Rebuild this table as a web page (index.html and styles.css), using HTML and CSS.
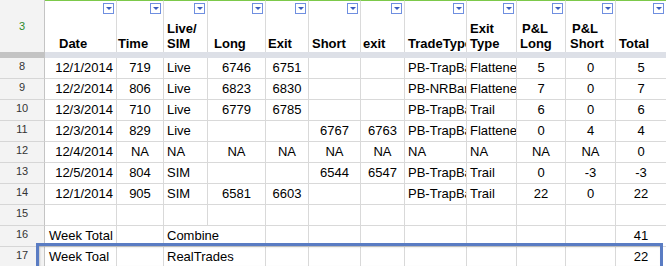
FILE: index.html
```html
<!DOCTYPE html>
<html>
<head>
<meta charset="utf-8">
<link rel="stylesheet" href="styles.css">
</head>
<body>
<div class="sheet">
  <div class="row head">
    <div class="rh rh-head">3</div>
    <div class="hc"><span class="filter"></span><div class="ht p14">Date</div></div>
    <div class="hc"><span class="filter"></span><div class="ht p1">Time</div></div>
    <div class="hc"><span class="filter"></span><div class="ht">Live/<br>SIM</div></div>
    <div class="hc"><span class="filter"></span><div class="ht p6">Long</div></div>
    <div class="hc"><span class="filter"></span><div class="ht p2">Exit</div></div>
    <div class="hc"><span class="filter"></span><div class="ht">Short</div></div>
    <div class="hc"><span class="filter"></span><div class="ht p2">exit</div></div>
    <div class="hc"><span class="filter"></span><div class="ht">TradeType</div></div>
    <div class="hc"><span class="filter"></span><div class="ht">Exit<br>Type</div></div>
    <div class="hc"><span class="filter"></span><div class="ht"><span class="in2">P&amp;L</span><br>Long</div></div>
    <div class="hc"><span class="filter"></span><div class="ht p4"><span class="in2">P&amp;L</span><br>Short</div></div>
    <div class="hc"><span class="filter"></span><div class="ht">Total</div></div>
  </div>
  <div class="freeze"><div class="fz-rh"></div><div class="fz-data"></div></div>

  <div class="row">
    <div class="rh">8</div>
    <div class="c r">12/1/2014</div><div class="c m">719</div><div class="c">Live</div>
    <div class="c m">6746</div><div class="c m">6751</div><div class="c m"></div><div class="c m"></div>
    <div class="c">PB-TrapBar</div><div class="c">Flattened</div>
    <div class="c m">5</div><div class="c m">0</div><div class="c m">5</div>
  </div>
  <div class="row">
    <div class="rh">9</div>
    <div class="c r">12/2/2014</div><div class="c m">806</div><div class="c">Live</div>
    <div class="c m">6823</div><div class="c m">6830</div><div class="c m"></div><div class="c m"></div>
    <div class="c">PB-NRBar</div><div class="c">Flattened</div>
    <div class="c m">7</div><div class="c m">0</div><div class="c m">7</div>
  </div>
  <div class="row">
    <div class="rh">10</div>
    <div class="c r">12/3/2014</div><div class="c m">710</div><div class="c">Live</div>
    <div class="c m">6779</div><div class="c m">6785</div><div class="c m"></div><div class="c m"></div>
    <div class="c">PB-TrapBar</div><div class="c">Trail</div>
    <div class="c m">6</div><div class="c m">0</div><div class="c m">6</div>
  </div>
  <div class="row">
    <div class="rh">11</div>
    <div class="c r">12/3/2014</div><div class="c m">829</div><div class="c">Live</div>
    <div class="c m"></div><div class="c m"></div><div class="c m">6767</div><div class="c m">6763</div>
    <div class="c">PB-TrapBar</div><div class="c">Flattened</div>
    <div class="c m">0</div><div class="c m">4</div><div class="c m">4</div>
  </div>
  <div class="row">
    <div class="rh">12</div>
    <div class="c r">12/4/2014</div><div class="c m">NA</div><div class="c">NA</div>
    <div class="c m">NA</div><div class="c m">NA</div><div class="c m">NA</div><div class="c m">NA</div>
    <div class="c">NA</div><div class="c">NA</div>
    <div class="c m">NA</div><div class="c m">NA</div><div class="c m">0</div>
  </div>
  <div class="row">
    <div class="rh">13</div>
    <div class="c r">12/5/2014</div><div class="c m">804</div><div class="c">SIM</div>
    <div class="c m"></div><div class="c m"></div><div class="c m">6544</div><div class="c m">6547</div>
    <div class="c">PB-TrapBar</div><div class="c">Trail</div>
    <div class="c m">0</div><div class="c m">-3</div><div class="c m">-3</div>
  </div>
  <div class="row">
    <div class="rh">14</div>
    <div class="c r">12/1/2014</div><div class="c m">905</div><div class="c">SIM</div>
    <div class="c m">6581</div><div class="c m">6603</div><div class="c m"></div><div class="c m"></div>
    <div class="c">PB-TrapBar</div><div class="c">Trail</div>
    <div class="c m">22</div><div class="c m">0</div><div class="c m">22</div>
  </div>
  <div class="row">
    <div class="rh">15</div>
    <div class="c"></div><div class="c"></div><div class="c"></div>
    <div class="c"></div><div class="c"></div><div class="c"></div><div class="c"></div>
    <div class="c"></div><div class="c"></div>
    <div class="c"></div><div class="c"></div><div class="c"></div>
  </div>
  <div class="row">
    <div class="rh">16</div>
    <div class="c wk">Week Total</div><div class="c"></div><div class="c span2">Combine</div>
    <div class="c"></div><div class="c"></div><div class="c"></div>
    <div class="c"></div><div class="c"></div>
    <div class="c"></div><div class="c"></div><div class="c m">41</div>
  </div>
  <div class="row">
    <div class="rh">17</div>
    <div class="c wk">Week Toal</div><div class="c"></div><div class="c span2">RealTrades</div>
    <div class="c"></div><div class="c"></div><div class="c"></div>
    <div class="c"></div><div class="c"></div>
    <div class="c"></div><div class="c"></div><div class="c m">22</div>
  </div>

  <div class="selection"></div>
</div>
</body>
</html>
```

FILE: styles.css
```css
html, body {
  margin: 0;
  padding: 0;
  background: #fff;
  overflow: hidden;
}

.sheet {
  position: relative;
  width: 667px;
  height: 266px;
  overflow: hidden;
  font-family: "Liberation Sans", Arial, sans-serif;
  font-size: 13px;
  color: #000;
}

.row {
  display: grid;
  grid-template-columns: 45px 72px 47px 44px 58px 43px 52px 44px 62px 50px 49px 50px 51px;
  height: 21px;
}

.row.head {
  height: 52px;
}

.rh {
  box-sizing: border-box;
  background: #f3f3f3;
  border-right: 1px solid #c4c4c4;
  border-bottom: 1px solid #d6d6d6;
  font-size: 11px;
  color: #333;
  text-align: center;
  line-height: 17px;
}

.rh-head {
  border-bottom: none;
  display: flex;
  align-items: center;
  justify-content: center;
  color: #2c8a2c;
  padding-top: 1px;
}

.hc {
  box-sizing: border-box;
  border-top: 1px solid #7cc94a;
  border-right: 1px solid #dadada;
  display: flex;
  flex-direction: column;
  justify-content: space-between;
  overflow: hidden;
}

.filter {
  align-self: flex-end;
  box-sizing: border-box;
  width: 11px;
  height: 11px;
  margin: 2px 2px 0 0;
  border: 1px solid #6f8fe0;
  background: #fff;
  flex: none;
}

.filter::after {
  content: "";
  display: block;
  width: 0;
  height: 0;
  margin: 3px auto 0;
  border-left: 3px solid transparent;
  border-right: 3px solid transparent;
  border-top: 3px solid #3a5cc0;
}

.ht {
  font-weight: bold;
  line-height: 15px;
  padding: 0 0 1px 3px;
  white-space: nowrap;
}

.ht.p14 { padding-left: 14px; }
.ht.p1 { padding-left: 1px; }
.ht.p2 { padding-left: 2px; }
.ht.p4 { padding-left: 4px; }
.ht.p6 { padding-left: 6px; }
.in2 { padding-left: 2px; }

.freeze {
  display: grid;
  grid-template-columns: 45px 1fr;
  height: 6px;
}

.fz-rh { background: #c3c3c3; }
.fz-data { background: #dde0e7; }

.c {
  box-sizing: border-box;
  border-right: 1px solid #d9d9d9;
  border-bottom: 1px solid #d9d9d9;
  line-height: 20px;
  padding: 0 3px;
  white-space: nowrap;
  overflow: hidden;
}

.c.r { text-align: right; }
.c.m { text-align: center; }
.c.wk { padding-left: 4px; }
.c.span2 { grid-column: span 2; }

.selection {
  position: absolute;
  left: 36px;
  top: 243px;
  width: 627px;
  height: 26px;
  box-sizing: border-box;
  border: 3px solid #5a7cc3;
  box-shadow: inset 1px 1px 2px rgba(0, 0, 0, 0.18);
}
```
